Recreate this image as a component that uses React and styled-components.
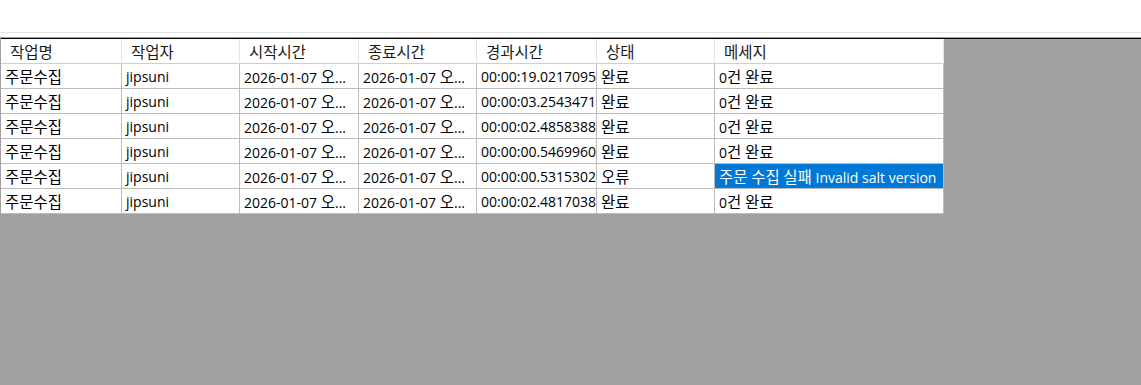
import React from "react";
import styled, { createGlobalStyle } from "styled-components";

const Global = createGlobalStyle`
  html, body { margin: 0; padding: 0; background: #ffffff; }
  body { font-family: "Open Sans", "Noto Sans CJK KR", sans-serif; }
`;

const Window = styled.div`
  width: 1141px;
  height: 385px;
  display: flex;
  flex-direction: column;
  background: #ffffff;
  overflow: hidden;
`;

const Toolbar = styled.div`
  height: 32px;
  border-bottom: 1px solid #e3e3e3;
  background: #ffffff;
`;

const Spacer = styled.div`
  height: 4px;
  background: #ffffff;
`;

const GridPanel = styled.div`
  flex: 1;
  background: #a0a0a0;
  border-top: 1px solid #a0a0a0;
  border-left: 1px solid #a0a0a0;
  display: flex;
  flex-direction: column;
`;

const InnerEdge = styled.div`
  flex: 1;
  border-top: 1px solid #000000;
  display: flex;
  align-items: flex-start;
`;

const Table = styled.div`
  display: grid;
  grid-template-columns: ${(p) => p.$cols.map((c) => `${c}px`).join(" ")};
  grid-auto-rows: 25px;
  background: #ffffff;
  font-size: 14px;
  color: #000000;
`;

const HeadCell = styled.div`
  display: flex;
  align-items: center;
  padding-left: 9px;
  padding-top: 1px;
  border-right: 1px solid #e5e5e5;
  border-bottom: 1px solid #cfcfcf;
  background: #ffffff;
  color: #1a1a1a;
  overflow: hidden;
  box-sizing: border-box;
`;

const Cell = styled.div`
  display: flex;
  align-items: center;
  padding-left: 4px;
  padding-top: 1px;
  border-right: 1px solid #bcbcbc;
  border-bottom: 1px solid #bcbcbc;
  background: ${(p) => (p.$selected ? "#0078d7" : "#ffffff")};
  color: ${(p) => (p.$selected ? "#ffffff" : "#000000")};
  overflow: hidden;
  box-sizing: border-box;
`;

const Label = styled.span`
  white-space: nowrap;
  line-height: 1;
`;

const Hangul = styled.span`
  font-family: "Noto Sans CJK KR", sans-serif;
  font-size: 15.5px;
  line-height: 1;
`;

function Txt({ children }) {
  const parts = String(children).split(/([\uAC00-\uD7A3]+)/);
  return (
    <Label>
      {parts.map((p, i) =>
        /[\uAC00-\uD7A3]/.test(p) ? (
          <Hangul key={i}>{p}</Hangul>
        ) : p ? (
          <React.Fragment key={i}>{p}</React.Fragment>
        ) : null
      )}
    </Label>
  );
}

const columns = [121, 118, 119, 118, 120, 118, 229];
const headers = ["작업명", "작업자", "시작시간", "종료시간", "경과시간", "상태", "메세지"];

const rows = [
  ["00:00:19.0217095", "완료", "0건 완료"],
  ["00:00:03.2543471", "완료", "0건 완료"],
  ["00:00:02.4858388", "완료", "0건 완료"],
  ["00:00:00.5469960", "완료", "0건 완료"],
  ["00:00:00.5315302", "오류", "주문 수집 실패 Invalid salt version", true],
  ["00:00:02.4817038", "완료", "0건 완료"],
];

export default function App() {
  return (
    <>
      <Global />
      <Window>
        <Toolbar />
        <Spacer />
        <GridPanel>
          <InnerEdge>
            <Table $cols={columns}>
              {headers.map((h) => (
                <HeadCell key={h}>
                  <Txt>{h}</Txt>
                </HeadCell>
              ))}
              {rows.map(([elapsed, status, msg, sel], i) => (
                <React.Fragment key={i}>
                  <Cell><Txt>주문수집</Txt></Cell>
                  <Cell><Txt>jipsuni</Txt></Cell>
                  <Cell><Txt>2026-01-07 오...</Txt></Cell>
                  <Cell><Txt>2026-01-07 오...</Txt></Cell>
                  <Cell><Txt>{elapsed}</Txt></Cell>
                  <Cell><Txt>{status}</Txt></Cell>
                  <Cell $selected={sel}><Txt>{msg}</Txt></Cell>
                </React.Fragment>
              ))}
            </Table>
          </InnerEdge>
        </GridPanel>
      </Window>
    </>
  );
}
